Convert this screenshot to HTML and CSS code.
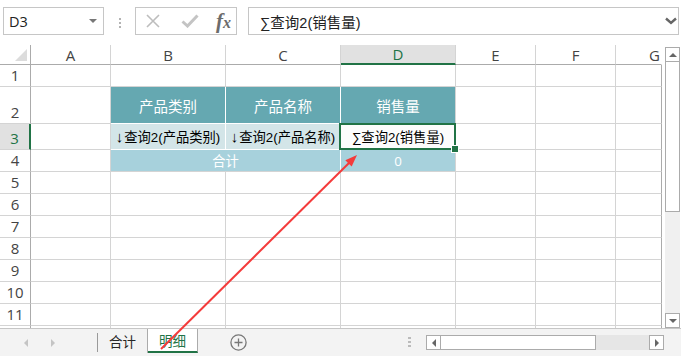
FILE: index.html
```html
<!DOCTYPE html>
<html lang="zh">
<head>
    <meta charset="UTF-8">
    <title>销售汇总</title>
    <link rel="stylesheet" href="styles.css">
</head>
<body>
<div class="app">
    <!-- barra de fórmulas -->
    <div class="formula-bar">
        <div class="name-box"><span>D3</span><span class="caret"></span></div>
        <div class="grip"><i></i><i></i><i></i></div>
        <div class="fn-box">
            <svg class="ico-x" width="14" height="14" viewBox="0 0 14 14"><path d="M1 1 L13 13 M13 1 L1 13" /></svg>
            <svg class="ico-ok" width="18" height="14" viewBox="0 0 18 14"><path d="M1.5 7.5 L6.5 12 L16.5 1.5" /></svg>
            <span class="fx">f<span>x</span></span>
        </div>
        <div class="formula-input">
            <span>∑查询2(销售量)</span>
            <svg class="chev" width="12" height="8" viewBox="0 0 12 8"><path d="M1 1.5 L6 6 L11 1.5" /></svg>
        </div>
    </div>

    <div class="sheet">
        <div class="grid">
            <div class="corner"><span></span></div>
            <div class="ch">A</div>
            <div class="ch">B</div>
            <div class="ch">C</div>
            <div class="ch on">D</div>
            <div class="ch">E</div>
            <div class="ch">F</div>
            <div class="ch last">G</div>

            <div class="rh">1</div><div></div><div></div><div></div><div></div><div></div><div></div><div class="edge"></div>

            <div class="rh">2</div>
            <div></div>
            <div class="th">产品类别</div>
            <div class="th">产品名称</div>
            <div class="th end">销售量</div>
            <div></div><div></div><div class="edge"></div>

            <div class="rh on">3</div>
            <div></div>
            <div class="tq"><b class="arr">↓</b>查询2(产品类别)</div>
            <div class="tq"><b class="arr">↓</b>查询2(产品名称)</div>
            <div class="tq sel">∑查询2(销售量)</div>
            <div></div><div></div><div class="edge"></div>

            <div class="rh">4</div>
            <div></div>
            <div class="tt merged">合计</div>
            <div class="tt">0</div>
            <div></div><div></div><div class="edge"></div>

            <div class="rh">5</div><div></div><div></div><div></div><div></div><div></div><div></div><div class="edge"></div>
            <div class="rh">6</div><div></div><div></div><div></div><div></div><div></div><div></div><div class="edge"></div>
            <div class="rh">7</div><div></div><div></div><div></div><div></div><div></div><div></div><div class="edge"></div>
            <div class="rh">8</div><div></div><div></div><div></div><div></div><div></div><div></div><div class="edge"></div>
            <div class="rh">9</div><div></div><div></div><div></div><div></div><div></div><div></div><div class="edge"></div>
            <div class="rh">10</div><div></div><div></div><div></div><div></div><div></div><div></div><div class="edge"></div>
            <div class="rh">11</div><div></div><div></div><div></div><div></div><div></div><div></div><div class="edge"></div>
            <div class="rh"></div><div></div><div></div><div></div><div></div><div></div><div></div><div class="edge"></div>
        </div>

        <div class="vscroll">
            <div class="sb-btn"><span class="tri up"></span></div>
            <div class="sb-thumb"></div>
            <div class="sb-track"></div>
            <div class="sb-btn"><span class="tri down"></span></div>
        </div>
    </div>

    <!-- pestañas de hojas -->
    <div class="tabs">
        <div class="tab-nav"><span class="tri left"></span><span class="tri right"></span></div>
        <div class="tab-sep"></div>
        <div class="tab">合计</div>
        <div class="tab active">明细</div>
        <div class="add-sheet">
            <svg width="17" height="17" viewBox="0 0 17 17"><circle cx="8.5" cy="8.5" r="7.6" /><path d="M8.5 4.5 V12.5 M4.5 8.5 H12.5" /></svg>
        </div>
        <div class="grip grip-h"><i></i><i></i><i></i></div>
        <div class="hscroll">
            <div class="sb-btn"><span class="tri left dark"></span></div>
            <div class="sb-thumb"></div>
            <div class="sb-track"></div>
            <div class="sb-btn"><span class="tri right dark"></span></div>
        </div>
    </div>

    <!-- flecha de anotación -->
    <svg class="annotation" width="681" height="356" viewBox="0 0 681 356">
        <line x1="161" y1="349" x2="350" y2="162" />
        <polygon points="357,155 351.7,166.6 345.3,160.2" />
    </svg>
</div>
</body>
</html>
```

FILE: styles.css
```css
* {
    margin: 0;
    padding: 0;
    box-sizing: border-box;
}

body {
    width: 681px;
    height: 356px;
    overflow: hidden;
    background: #fff;
    font-family: 'Open Sans', 'Noto Sans CJK SC', sans-serif;
    color: #222;
}

.app {
    position: relative;
    width: 681px;
    height: 356px;
}

/* Barra de fórmulas */
.formula-bar {
    display: flex;
    align-items: flex-start;
    height: 45px;
    padding-top: 7px;
}

.name-box {
    width: 101px;
    height: 28px;
    margin-left: 3px;
    border: 1px solid #c6c6c6;
    display: flex;
    align-items: center;
    justify-content: space-between;
    padding: 0 6px 0 5px;
    font-size: 14.5px;
    color: #222;
}

.caret {
    width: 0;
    height: 0;
    border-left: 4px solid transparent;
    border-right: 4px solid transparent;
    border-top: 4px solid #777;
}

.grip {
    display: flex;
    flex-direction: column;
    gap: 2px;
    margin-left: 15px;
    margin-top: 11px;
}

.grip i {
    display: block;
    width: 2px;
    height: 2px;
    background: #b3b3b3;
}

.fn-box {
    width: 102px;
    height: 28px;
    margin-left: 14px;
    border: 1px solid #c6c6c6;
    display: flex;
    align-items: center;
    padding-left: 10px;
}

.ico-x path {
    stroke: #bdbdbd;
    stroke-width: 1.6;
    fill: none;
}

.ico-ok {
    margin-left: 21px;
}

.ico-ok path {
    stroke: #c4c4c4;
    stroke-width: 3;
    fill: none;
}

.fx {
    margin-left: 17px;
    font-family: 'Liberation Serif', serif;
    font-style: italic;
    font-weight: bold;
    font-size: 21px;
    color: #6c6c6c;
    line-height: 1;
}

.fx span {
    font-size: 16px;
}

.formula-input {
    width: 431px;
    height: 28px;
    margin-left: 11px;
    border: 1px solid #c6c6c6;
    display: flex;
    align-items: center;
    justify-content: space-between;
    padding: 0 1px 0 11px;
    font-family: 'Liberation Sans', 'Noto Sans CJK SC', sans-serif;
    font-size: 14.5px;
    color: #222;
}

.chev path {
    stroke: #666;
    stroke-width: 2.4;
    fill: none;
}

/* Hoja */
.sheet {
    display: flex;
    height: 283px;
}

.grid {
    display: grid;
    grid-template-columns: 31px 80px 115px 115px 115px 80px 80px 46px;
    grid-template-rows: 20px 22px 37px 26px 22px repeat(8, 22px);
    width: 662px;
    height: 283px;
    overflow: hidden;
}

.grid > div {
    border-right: 1px solid #d4d4d4;
    border-bottom: 1px solid #d4d4d4;
    display: flex;
    align-items: center;
    justify-content: center;
    white-space: nowrap;
    overflow: hidden;
}

.grid > .edge {
    border-right-color: #ababab;
}

.corner {
    border-right-color: #ababab !important;
    border-bottom-color: #ababab !important;
    justify-content: flex-end !important;
    align-items: flex-end !important;
    padding: 0 3px 3px 0;
}

.corner span {
    width: 0;
    height: 0;
    border-left: 12px solid transparent;
    border-bottom: 12px solid #dcdcdc;
}

.ch {
    border-bottom-color: #ababab !important;
    font-size: 15px;
    color: #444;
}

.ch.last {
    border-right-color: transparent !important;
    justify-content: flex-end !important;
    padding-right: 1px;
}

.ch.on {
    background: #e1e1e1;
    color: #217346;
    border-bottom: 2px solid #217346 !important;
}

.rh {
    border-right-color: #ababab !important;
    align-items: flex-end !important;
    padding-bottom: 1px;
    font-size: 15px;
    color: #444;
}

.rh.on {
    background: #e1e1e1;
    color: #217346;
    border-right: 2px solid #217346 !important;
}

.th {
    background: #65a8b1;
    color: #fff;
    font-size: 14.5px;
    border-right-color: #fff !important;
    border-bottom-color: #fff !important;
}

.th.end {
    border-right-color: #d4d4d4 !important;
}

.tq {
    background: #d3e5e8;
    color: #000;
    font-family: 'Liberation Sans', 'Noto Sans CJK SC', sans-serif;
    font-size: 13.3px;
    border-right-color: #fff !important;
    border-bottom-color: #fff !important;
}

.tq .arr {
    font-size: 15px;
    margin-right: 1px;
}

.tt {
    background: #a7d1dc;
    color: #fff;
    font-size: 13.3px;
}

.tt.merged {
    grid-column: span 2;
    border-right-color: #fff !important;
}

.tq.sel {
    position: relative;
    overflow: visible !important;
    background: #fcfcfc;
    border-right-color: #d4d4d4 !important;
    border-bottom-color: #d4d4d4 !important;
}

.tq.sel::before {
    content: '';
    position: absolute;
    left: -2px;
    top: -1px;
    right: -1px;
    bottom: -1px;
    border: 2px solid #217346;
}

.tq.sel::after {
    content: '';
    position: absolute;
    right: -3px;
    bottom: -3px;
    width: 6px;
    height: 6px;
    background: #217346;
    outline: 1px solid #fff;
}

/* Barras de desplazamiento */
.vscroll {
    width: 15px;
    margin-left: 3px;
    padding-top: 2px;
    display: flex;
    flex-direction: column;
}

.sb-btn {
    width: 15px;
    height: 15px;
    border: 1px solid #ababab;
    background: #fff;
    display: flex;
    align-items: center;
    justify-content: center;
    flex-shrink: 0;
}

.vscroll .sb-thumb {
    height: 150px;
    background: #fff;
    border: 1px solid #ababab;
    border-top: none;
}

.vscroll .sb-track {
    flex: 1;
    background: #f0f0f0;
}

.tri {
    width: 0;
    height: 0;
}

.tri.up {
    border-left: 4px solid transparent;
    border-right: 4px solid transparent;
    border-bottom: 4px solid #666;
}

.tri.down {
    border-left: 4px solid transparent;
    border-right: 4px solid transparent;
    border-top: 4px solid #666;
}

.tri.left {
    border-top: 4px solid transparent;
    border-bottom: 4px solid transparent;
    border-right: 4px solid #c4c4c4;
}

.tri.right {
    border-top: 4px solid transparent;
    border-bottom: 4px solid transparent;
    border-left: 4px solid #c4c4c4;
}

.tri.dark {
    border-left-color: transparent;
    border-right-color: transparent;
}

.tri.left.dark {
    border-right-color: #666;
}

.tri.right.dark {
    border-left-color: #666;
}

/* Pestañas */
.tabs {
    display: flex;
    align-items: flex-start;
    height: 28px;
    background: #f3f3f3;
    border-top: 1px solid #c6c6c6;
}

.tab-nav {
    width: 97px;
    height: 27px;
    display: flex;
    align-items: center;
    padding-left: 24px;
    gap: 23px;
}

.tab-sep {
    width: 1px;
    height: 19px;
    margin-top: 4px;
    background: #9a9a9a;
}

.tab {
    width: 50px;
    height: 24px;
    border-right: 1px solid #ababab;
    display: flex;
    align-items: center;
    justify-content: center;
    font-size: 13.5px;
    color: #262626;
}

.tab.active {
    background: #fff;
    color: #217346;
    border-bottom: 2px solid #217346;
}

.add-sheet {
    margin-left: 32px;
    margin-top: 5px;
    height: 17px;
}

.add-sheet circle,
.add-sheet path {
    stroke: #777;
    stroke-width: 1.3;
    fill: none;
}

.grip-h {
    margin-left: 161px;
    margin-top: 8px;
}

.grip-h i {
    width: 3px;
    height: 2px;
    background: #bbb;
}

.hscroll {
    display: flex;
    width: 238px;
    height: 15px;
    margin-left: 15px;
    margin-top: 6px;
}

.hscroll .sb-thumb {
    width: 155px;
    background: #fff;
    border: 1px solid #ababab;
    border-left: none;
}

.hscroll .sb-track {
    flex: 1;
    background: #e6e6e6;
}

/* Anotación */
.annotation {
    position: absolute;
    left: 0;
    top: 0;
    pointer-events: none;
}

.annotation line {
    stroke: #f43b3b;
    stroke-width: 2;
}

.annotation polygon {
    fill: #f43b3b;
}
```
